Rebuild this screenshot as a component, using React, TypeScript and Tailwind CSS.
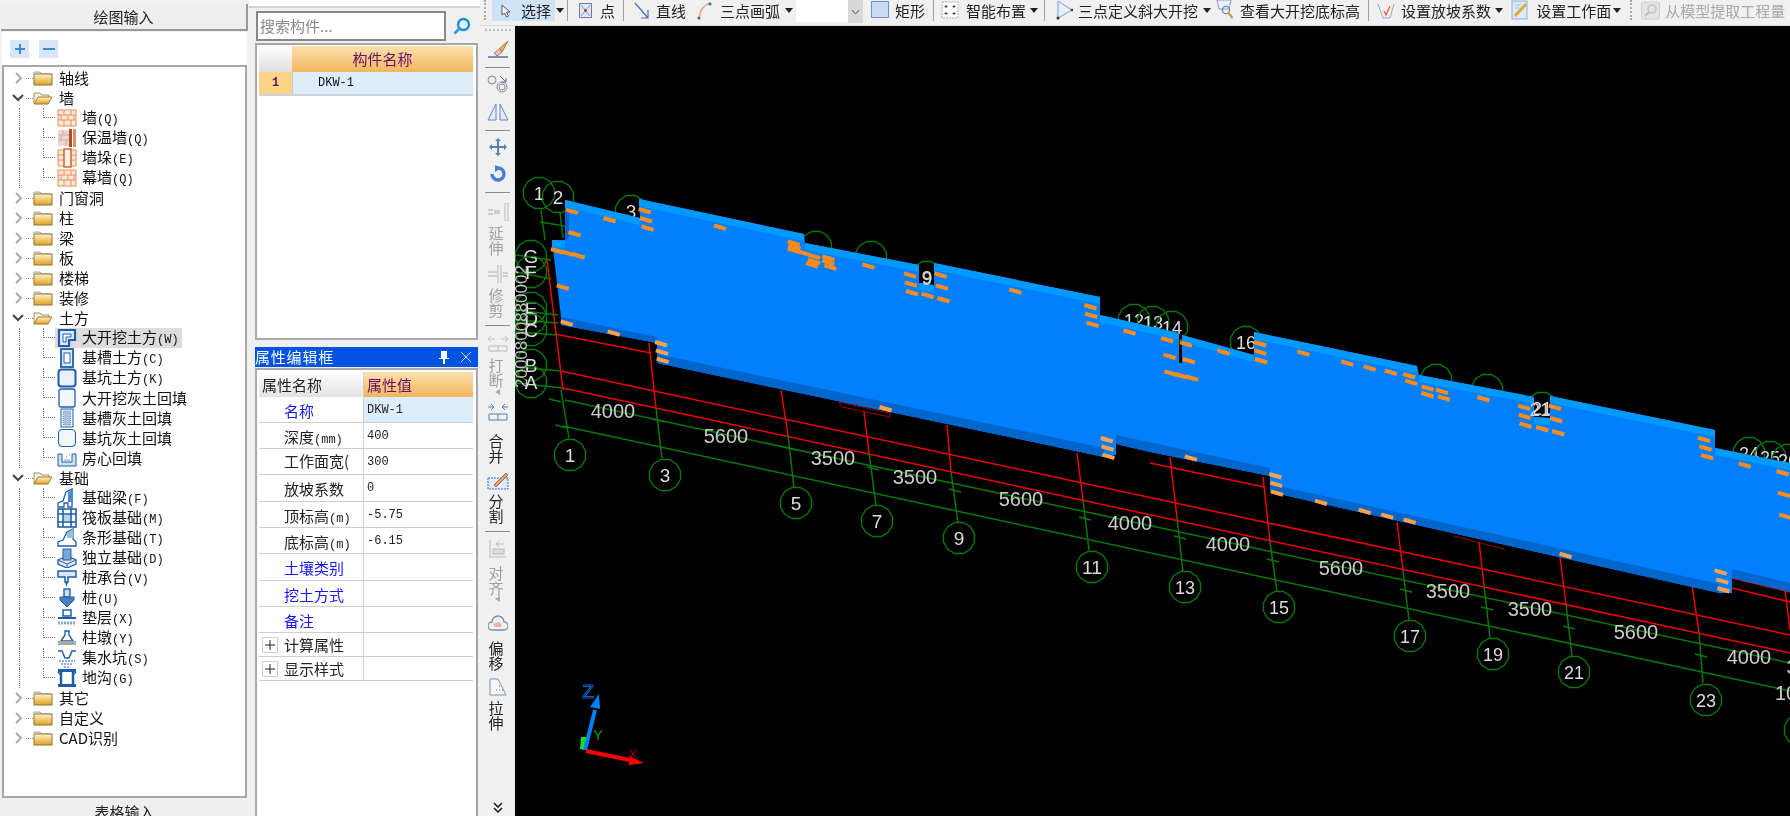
import React from "react";

const CJK = "[font-family:'Noto_Sans_CJK_SC','Liberation_Sans',sans-serif]";
const MONO = "[font-family:'Liberation_Mono','Noto_Sans_CJK_SC',monospace]";

/* ---------- small drawn icons ---------- */
function Folder({ open }: { open?: boolean }) {
  return (
    <svg width="20" height="16" viewBox="0 0 20 16" className="shrink-0">
      <defs>
        <linearGradient id="fo" x1="0" y1="0" x2="0" y2="1">
          <stop offset="0" stopColor="#fff6c8" />
          <stop offset="1" stopColor="#e0a020" />
        </linearGradient>
      </defs>
      {open ? (
        <>
          <path d="M1 14V3h6l2 2h7v3" fill="#f4efe0" stroke="#a89060" />
          <path d="M1 14L5 7h14l-4 7z" fill="url(#fo)" stroke="#a07a30" />
        </>
      ) : (
        <>
          <path d="M1 3V2h6l2 2h9v1" fill="#ddd" stroke="#aaa" />
          <rect x="1" y="4" width="18" height="11" fill="url(#fo)" stroke="#8a7440" />
        </>
      )}
    </svg>
  );
}

function TIcon({ k }: { k: string }) {
  const b = "#1e5ea8";
  const l = "#dfeafa";
  const o = "#e8905c";
  const common = { fill: "none", stroke: b, strokeWidth: 1.5 };
  let c: React.ReactNode = null;
  switch (k) {
    case "brick":
      c = (
        <>
          <rect x="1" y="2" width="18" height="16" fill="#fde8d8" stroke={o} />
          <path d="M1 7h18M1 12h18M7 2v5M14 2v5M4 7v5M11 7v5M17 7v5M7 12v6M14 12v6" stroke={o} fill="none" />
        </>
      );
      break;
    case "insul":
      c = (
        <>
          <rect x="1" y="2" width="12" height="16" fill="#ecd6d2" />
          <path d="M1 7h12M1 12h12M6 2v5M4 7v5M9 12v6" stroke="#d8a8a0" fill="none" />
          <rect x="12" y="1" width="3" height="18" fill="#b84a28" />
          <rect x="16" y="1" width="3" height="18" fill="#d89070" />
        </>
      );
      break;
    case "pier":
      c = (
        <>
          <rect x="1" y="2" width="18" height="16" fill="#fde8d8" stroke={o} />
          <path d="M1 7h18M1 12h18" stroke={o} fill="none" />
          <rect x="7" y="1" width="7" height="18" fill="#fdf0e4" stroke="#c8602c" strokeWidth="1.4" />
        </>
      );
      break;
    case "dkw":
      c = (
        <>
          <path d="M2 2h16v10h-6v6H2z" fill={l} stroke={b} strokeWidth="2.2" />
          <path d="M6 6h8v3h-5v5H6z" fill="#fff" stroke={b} />
        </>
      );
      break;
    case "cao":
      c = (
        <>
          <rect x="4" y="1" width="12" height="18" fill={l} stroke={b} strokeWidth="1.8" />
          <rect x="7" y="5" width="6" height="10" fill="#fff" stroke={b} />
        </>
      );
      break;
    case "keng":
      c = <rect x="1.5" y="1.5" width="17" height="17" rx="3" fill="#e8f0fb" stroke={b} strokeWidth="2" />;
      break;
    case "fill1":
      c = <rect x="2" y="1" width="16" height="18" rx="2" fill="#f2f6fc" stroke={b} strokeWidth="1.3" />;
      break;
    case "fill2":
      c = (
        <>
          <rect x="4" y="1" width="12" height="18" fill="#eef3fb" stroke={b} />
          <rect x="6.5" y="3" width="7" height="14" fill="#a9c0de" stroke="#6e8fb8" strokeDasharray="1 1" />
        </>
      );
      break;
    case "fill3":
      c = <rect x="1.5" y="1.5" width="17" height="17" rx="4" fill="#f4f8fd" stroke={b} strokeWidth="1.1" />;
      break;
    case "room":
      c = (
        <>
          <path d="M1 6v12h18V6h-4v8H5V6z" fill="#cfe0f5" stroke={b} />
          <path d="M7 12h6M9 9h1M12 7h1" stroke="#6f9ed4" />
        </>
      );
      break;
    case "beam":
      c = (
        <>
          <path d="M1 19v-4l5-2 3-9 6-3v18H11v-4H7v4z" fill="#fff" stroke={b} strokeWidth="1.3" />
          <path d="M11 4l5-3v13h-5z" fill="#4a8ad0" />
        </>
      );
      break;
    case "raft":
      c = (
        <>
          <rect x="1" y="1" width="18" height="18" fill="#fff" stroke={b} strokeWidth="1.6" />
          <path d="M1 6h18M1 14h18M6 1v18M14 1v18" stroke={b} strokeWidth="1.6" />
          <rect x="7" y="7" width="6" height="6" fill="#bcd4ef" />
        </>
      );
      break;
    case "strip":
      c = (
        <>
          <path d="M1 18v-4l5-2 4-8 6-3v10l3 3v4z" fill="#fff" stroke={b} strokeWidth="1.3" />
          <path d="M10 5l6-4v9h-6z" fill="#9dbfe6" />
        </>
      );
      break;
    case "iso":
      c = (
        <>
          <path d="M1 12l9-4 9 4v4l-9 4-9-4z" fill="#e4eefb" stroke={b} strokeWidth="1.3" />
          <path d="M1 12l9 4 9-4M10 16v4" stroke={b} fill="none" />
          <rect x="6" y="1" width="8" height="11" fill="#7aa6d8" stroke={b} />
        </>
      );
      break;
    case "cap":
      c = (
        <>
          <path d="M1 3h18v6h-8v5H8V9H1z" fill="#dce8f7" stroke={b} strokeWidth="1.5" />
          <path d="M8 14l1.5 5 1.5-5z" fill={b} />
        </>
      );
      break;
    case "pile":
      c = (
        <>
          <rect x="7" y="1" width="6" height="8" fill="#cfe0f5" stroke={b} strokeWidth="1.4" />
          <path d="M3 9h14v3l-7 7-7-7z" fill="#4a7fc0" stroke={b} />
        </>
      );
      break;
    case "pad":
      c = (
        <>
          <rect x="6" y="2" width="8" height="6" {...common} />
          <path d="M1 10h18" stroke={b} strokeWidth="2" />
          <path d="M1 15h18" stroke="#7fa8d8" strokeWidth="3" strokeDasharray="2 1" />
        </>
      );
      break;
    case "dun":
      c = (
        <>
          <path d="M8 3h4v4l4 6H4l4-6z" fill="#fff" stroke={b} strokeWidth="1.4" />
          <rect x="1" y="13" width="18" height="4" fill="#a8a8a8" />
        </>
      );
      break;
    case "pit":
      c = (
        <>
          <path d="M1 3h4l3 7h4l3-7h4" {...common} />
          <path d="M2 13h16M4 16h12M7 19h6" stroke="#8ab2e0" strokeWidth="2" strokeDasharray="2 1" />
        </>
      );
      break;
    case "ditch":
      c = (
        <>
          <rect x="1" y="1" width="18" height="3" fill={b} />
          <path d="M4 4v13M16 4v13" {...common} strokeWidth="2.5" />
          <rect x="1" y="16" width="18" height="3" fill={b} />
          <path d="M1 4l3 3M19 4l-3 3" {...common} />
        </>
      );
      break;
  }
  return (
    <svg width="20" height="20" viewBox="0 0 20 20" className="shrink-0">
      {c}
    </svg>
  );
}

/* ---------- left tree ---------- */
type Child = { n: string; s?: string; k: string; sel?: boolean };
type Node = { n: string; open?: boolean; kids?: Child[] };
const tree: Node[] = [
  { n: "轴线" },
  {
    n: "墙",
    open: true,
    kids: [
      { n: "墙", s: "(Q)", k: "brick" },
      { n: "保温墙", s: "(Q)", k: "insul" },
      { n: "墙垛", s: "(E)", k: "pier" },
      { n: "幕墙", s: "(Q)", k: "brick" },
    ],
  },
  { n: "门窗洞" },
  { n: "柱" },
  { n: "梁" },
  { n: "板" },
  { n: "楼梯" },
  { n: "装修" },
  {
    n: "土方",
    open: true,
    kids: [
      { n: "大开挖土方", s: "(W)", k: "dkw", sel: true },
      { n: "基槽土方", s: "(C)", k: "cao" },
      { n: "基坑土方", s: "(K)", k: "keng" },
      { n: "大开挖灰土回填", k: "fill1" },
      { n: "基槽灰土回填", k: "fill2" },
      { n: "基坑灰土回填", k: "fill3" },
      { n: "房心回填", k: "room" },
    ],
  },
  {
    n: "基础",
    open: true,
    kids: [
      { n: "基础梁", s: "(F)", k: "beam" },
      { n: "筏板基础", s: "(M)", k: "raft" },
      { n: "条形基础", s: "(T)", k: "strip" },
      { n: "独立基础", s: "(D)", k: "iso" },
      { n: "桩承台", s: "(V)", k: "cap" },
      { n: "桩", s: "(U)", k: "pile" },
      { n: "垫层", s: "(X)", k: "pad" },
      { n: "柱墩", s: "(Y)", k: "dun" },
      { n: "集水坑", s: "(S)", k: "pit" },
      { n: "地沟", s: "(G)", k: "ditch" },
    ],
  },
  { n: "其它" },
  { n: "自定义" },
  { n: "CAD识别" },
];

function TreePanel() {
  return (
    <div className="pt-[1px]">
      {tree.map((f) => (
        <div key={f.n}>
          <div className="flex h-5 items-center">
            <div className="flex w-[22px] shrink-0 justify-end pr-[1px]">
              <svg width="14" height="14" viewBox="0 0 14 14">
                {f.open ? (
                  <path d="M2 4l5 5 5-5" fill="none" stroke="#444" strokeWidth="2" />
                ) : (
                  <path d="M5 2l5 5-5 5" fill="none" stroke="#aaa" strokeWidth="2" />
                )}
              </svg>
            </div>
            <div className="h-px w-[7px] shrink-0 border-b border-dotted border-[#888]" />
            <Folder open={f.open} />
            <span className="ml-[6px] text-[15px] leading-5 text-[#111]">{f.n}</span>
          </div>
          {f.kids?.map((c, i) => (
            <div key={c.n + i} className="flex h-5">
              <div className="w-[15px] shrink-0" />
              <div className="w-[24px] shrink-0 border-l border-dotted border-[#777]" />
              <div className="h-[10px] w-[12px] shrink-0 border-b border-l border-dotted border-[#777]" />
              <div className={`flex h-5 items-center pl-[2px] pr-[3px] ${c.sel ? "bg-[#dcdcdc]" : ""}`}>
                <TIcon k={c.k} />
                <span className="ml-[5px] text-[15px] leading-5 text-[#111]">
                  {c.n}
                  {c.s ? <span className={`${MONO} text-[12px]`}>{c.s}</span> : null}
                </span>
              </div>
            </div>
          ))}
        </div>
      ))}
    </div>
  );
}

function LeftColumn() {
  return (
    <div className="flex w-[249px] shrink-0 flex-col bg-[#f0f0f0]">
      <div className="mx-[1px] mt-[4px] flex h-[27px] shrink-0 items-center justify-center border-b-2 border-r-2 border-[#999] bg-[#eeeeee] pt-[1px] text-[15px] text-[#222]">
        绘图输入
      </div>
      <div className="mx-[2px] mt-[1px] flex h-[33px] shrink-0 items-center gap-[10px] bg-white pl-[8px]">
        <div className="flex h-[18px] w-[19px] items-center justify-center bg-[#d9e6fa]">
          <svg width="12" height="12" viewBox="0 0 12 12">
            <path d="M6 1v10M1 6h10" stroke="#3a8ccc" strokeWidth="2" />
          </svg>
        </div>
        <div className="flex h-[18px] w-[19px] items-center justify-center bg-[#d9e6fa]">
          <svg width="14" height="12" viewBox="0 0 14 12">
            <path d="M1 6h12" stroke="#3a8ccc" strokeWidth="2" />
          </svg>
        </div>
      </div>
      <div className="mx-[2px] h-[733px] shrink-0 overflow-hidden border-2 border-[#a8a8a8] bg-white">
        <TreePanel />
      </div>
      <div className="mx-[1px] mt-[2px] flex h-[20px] shrink-0 items-start justify-center bg-[#eeeeee] pt-[1px] text-[15px] text-[#222]">
        表格输入
      </div>
    </div>
  );
}

/* ---------- middle ---------- */
const orange = "bg-gradient-to-b from-[#fbe0ae] to-[#f2b65a]";
const propRows: { n: string; v?: string; blue?: boolean; sel?: boolean; h: string; up?: boolean }[] = [
  { n: "名称", v: "DKW-1", blue: true, sel: true, h: "h-[26px]" },
  { n: "深度(mm)", v: "400", h: "h-[26px]" },
  { n: "工作面宽(", v: "300", h: "h-[26px]", up: true },
  { n: "放坡系数", v: "0", h: "h-[27px]" },
  { n: "顶标高(m)", v: "-5.75", h: "h-[26px]" },
  { n: "底标高(m)", v: "-6.15", h: "h-[26px]" },
  { n: "土壤类别", blue: true, h: "h-[27px]" },
  { n: "挖土方式", blue: true, h: "h-[26px]" },
  { n: "备注", blue: true, h: "h-[26px]" },
];

function Plus() {
  return (
    <div className="flex h-[16px] w-[16px] shrink-0 items-center justify-center border border-[#cfcfcf] bg-white">
      <svg width="10" height="10" viewBox="0 0 10 10">
        <path d="M5 0v10M0 5h10" stroke="#222" />
      </svg>
    </div>
  );
}

function formatLabel(s: string) {
  const m = s.match(/^([^(]+)(\(.+\))$/);
  if (!m) return s;
  return (
    <>
      {m[1]}
      <span className={`${MONO} text-[12px]`}>{m[2]}</span>
    </>
  );
}

function MiddleColumn() {
  return (
    <div className="flex w-[231px] shrink-0 flex-col bg-[#f0f0f0]">
      <div className="h-[8px] shrink-0 border-b-2 border-[#d4d4d4] bg-white" />
      <div className="ml-[7px] mr-[2px] mt-[3px] flex h-[30px] shrink-0">
        <div className="flex w-[190px] items-center border-2 border-[#888] bg-white pl-[2px] text-[15px] text-[#888]">
          搜索构件...
        </div>
        <div className="flex flex-1 items-center justify-center">
          <svg width="18" height="18" viewBox="0 0 18 18">
            <circle cx="10.5" cy="7.5" r="5.5" fill="#e0f1fb" stroke="#1e90d0" strokeWidth="2.4" />
            <path d="M6.5 11.5L1.5 16.5" stroke="#3c9ce0" strokeWidth="3" />
          </svg>
        </div>
      </div>
      <div className="ml-[6px] mr-[2px] mt-[2px] h-[297px] shrink-0 border-2 border-[#a8a8a8] bg-white pl-[2px] pr-[3px] pt-[1px]">
        <div className="flex h-[26px]">
          <div className="w-[33px] bg-gradient-to-b from-white to-[#dedede]" />
          <div className={`flex flex-1 items-center justify-center text-[15px] text-[#650e66] ${orange}`}>
            构件名称
          </div>
        </div>
        <div className="flex h-[24px] border-b-2 border-[#cfd4da]">
          <div className={`flex w-[33px] items-center justify-center bg-[#fdd385] text-[12px] font-bold text-[#650e66] ${MONO}`}>1</div>
          <div className={`flex flex-1 items-center border-l border-[#c8c8c8] bg-[#deedfc] pl-[25px] text-[12px] text-[#111] ${MONO}`}>
            DKW-1
          </div>
        </div>
      </div>
      <div className="ml-[6px] mr-[2px] mt-[7px] flex h-[20px] shrink-0 items-center bg-[#0052e2] pr-[6px] text-[15px] tracking-[0.8px] text-white">
        <span>属性编辑框</span>
        <svg width="12" height="14" viewBox="0 0 12 14" className="ml-auto">
          <path d="M3 1h6v7h2v1H7v5H5V9H1V8h2z" fill="#fff" />
        </svg>
        <svg width="12" height="12" viewBox="0 0 12 12" className="ml-[10px]">
          <path d="M1 1l10 10M11 1L1 11" stroke="#cfdcf5" />
        </svg>
      </div>
      <div className="ml-[6px] mr-[2px] mt-[1px] flex-1 border-2 border-b-0 border-[#a8a8a8] bg-white pl-[2px] pr-[3px] pt-[2px] text-[15px]">
        <div className="flex h-[25px]">
          <div className="flex w-[105px] items-center border-r border-[#cfcfcf] bg-gradient-to-b from-white to-[#e2e2e2] pl-[3px] pt-[1px] text-[#222]">
            属性名称
          </div>
          <div className={`flex flex-1 items-center pl-[3px] pt-[1px] text-[#650e66] ${orange}`}>属性值</div>
        </div>
        {propRows.map((r) => (
          <div key={r.n} className={`flex ${r.h} border-b border-[#cfcfcf]`}>
            <div className={`flex w-[105px] items-center border-r border-[#cfcfcf] pl-[25px] ${r.up ? "" : "pt-[3px]"} ${r.blue ? "text-[#1616f0]" : "text-[#222]"}`}>
              <span className="whitespace-nowrap">{formatLabel(r.n)}</span>
            </div>
            <div className={`flex flex-1 items-center pl-[3px] text-[12px] text-[#222] ${MONO} ${r.sel ? "bg-[#deedfc]" : ""}`}>{r.v}</div>
          </div>
        ))}
        {["计算属性", "显示样式"].map((n) => (
          <div key={n} className="flex h-[24px] border-b border-[#cfcfcf]">
            <div className="flex w-[105px] items-center border-r border-[#cfcfcf] pl-[3px] text-[#222]">
              <Plus />
              <span className="ml-[6px] pt-[2px]">{n}</span>
            </div>
          </div>
        ))}
      </div>
    </div>
  );
}

/* ---------- top toolbar ---------- */
function Caret({ className = "" }: { className?: string }) {
  return (
    <svg width="8" height="5" viewBox="0 0 8 5" className={`shrink-0 ${className}`}>
      <path d="M0 0h8L4 5z" fill="#222" />
    </svg>
  );
}
function Sep({ className = "" }: { className?: string }) {
  return <div className={`h-[21px] w-px shrink-0 bg-[#a0a0a0] ${className}`} />;
}
function Grip({ className = "" }: { className?: string }) {
  return <div className={`h-[20px] w-[2px] shrink-0 border-l-2 border-dotted border-[#aaa] ${className}`} />;
}
function Lbl({ t, className = "" }: { t: string; className?: string }) {
  return <span className={`shrink-0 whitespace-nowrap text-[15px] leading-[21px] text-[#222] ${className}`}>{t}</span>;
}

function TopBar() {
  return (
    <div className="flex h-[26px] shrink-0 items-start overflow-hidden border-b border-[#dcdcdc] bg-[#f0f0f0]">
      <Grip className="ml-[4px]" />
      <div className="ml-[6px] flex h-[21px] w-[63px] shrink-0 items-center bg-[#cfe3f8] pl-[9px]">
        <svg width="10" height="14" viewBox="0 0 10 14" className="shrink-0">
          <path d="M1 1v10l2.5-2 2 4 2-1-2-4H9z" fill="#fff" stroke="#555" />
        </svg>
        <Lbl t="选择" className="ml-[10px]" />
      </div>
      <Caret className="ml-[1px] mt-[8px]" />
      <Sep className="ml-[3px]" />
      <svg width="13" height="15" viewBox="0 0 13 15" className="ml-[11px] mt-[3px] shrink-0">
        <rect x="0.5" y="0.5" width="12" height="14" fill="#dfe9f8" stroke="#6a7fb0" />
        <path d="M2 2l9 11M11 2L2 13" stroke="#7f94bf" />
        <circle cx="6.5" cy="7.5" r="1.4" fill="#e02020" />
      </svg>
      <Lbl t="点" className="ml-[8px]" />
      <Sep className="ml-[8px]" />
      <svg width="16" height="18" viewBox="0 0 16 18" className="ml-[10px] mt-[2px] shrink-0">
        <path d="M1 1l13 15M14 8v8H7" fill="none" stroke="#3f6fb0" strokeWidth="1.2" />
      </svg>
      <Lbl t="直线" className="ml-[6px]" />
      <svg width="15" height="18" viewBox="0 0 15 18" className="ml-[11px] mt-[2px] shrink-0">
        <path d="M2 16C3 8 7 3 13 1" fill="none" stroke="#e8a080" strokeWidth="1.6" />
        <circle cx="2" cy="16" r="1.6" fill="#3f6fb0" />
        <circle cx="13" cy="2" r="1.6" fill="#3f6fb0" />
      </svg>
      <Lbl t="三点画弧" className="ml-[8px]" />
      <Caret className="ml-[5px] mt-[8px]" />
      <div className="ml-[3px] h-[22px] w-[52px] shrink-0 bg-white" />
      <div className="flex h-[23px] w-[15px] shrink-0 items-center justify-center bg-[#d8d8d8]">
        <svg width="9" height="6" viewBox="0 0 9 6">
          <path d="M1 1l3.5 4L8 1" fill="none" stroke="#555" />
        </svg>
      </div>
      <div className="ml-[8px] mt-[1px] h-[17px] w-[18px] shrink-0 border border-[#6f90c8] bg-[#c9dcf6]" />
      <Lbl t="矩形" className="ml-[6px]" />
      <Sep className="ml-[8px]" />
      <svg width="18" height="18" viewBox="0 0 18 18" className="ml-[7px] mt-[1px] shrink-0">
        <rect x="1" y="1" width="16" height="16" fill="#fff" stroke="#aaa" strokeDasharray="2 1" />
        <path d="M5 4v3M3.500 5.500h3M13 4v3M11.500 5.500h3M5 11v3M3.500 12.500h3M13 11v3M11.500 12.500h3" stroke="#444" />
      </svg>
      <Lbl t="智能布置" className="ml-[7px]" />
      <Caret className="ml-[4px] mt-[8px]" />
      <Sep className="ml-[6px]" />
      <svg width="17" height="20" viewBox="0 0 17 20" className="ml-[11px] shrink-0">
        <path d="M2 1v17l14-8z" fill="#e8f0fb" stroke="#7a9cd4" />
        <circle cx="2" cy="18" r="1.5" fill="#333" />
        <circle cx="16" cy="10" r="1.3" fill="#333" />
      </svg>
      <Lbl t="三点定义斜大开挖" className="ml-[5px]" />
      <Caret className="ml-[5px] mt-[8px]" />
      <svg width="18" height="20" viewBox="0 0 18 20" className="ml-[5px] shrink-0">
        <path d="M1 0h14l-2 9H3z" fill="#eaf0f8" stroke="#8aa0c0" />
        <circle cx="10" cy="10" r="3.600" fill="none" stroke="#7a8ca6" strokeWidth="1.4" />
        <path d="M12.500 13l4 5" stroke="#d89a3c" strokeWidth="2.200" />
      </svg>
      <Lbl t="查看大开挖底标高" className="ml-[6px]" />
      <Sep className="ml-[8px]" />
      <svg width="18" height="18" viewBox="0 0 18 18" className="ml-[8px] mt-[2px] shrink-0">
        <path d="M1 2l5 14h7l4-14" fill="none" stroke="#8aa8cc" />
        <path d="M7 9l2 4 4-9" fill="none" stroke="#e06040" strokeWidth="1.300" />
      </svg>
      <Lbl t="设置放坡系数" className="ml-[6px]" />
      <Caret className="ml-[4px] mt-[8px]" />
      <svg width="19" height="20" viewBox="0 0 19 20" className="ml-[8px] shrink-0">
        <rect x="1" y="1" width="15" height="18" fill="#dbe9f8" stroke="#8fb0d8" />
        <path d="M4 16L15 4" stroke="#e8a93c" strokeWidth="3" />
        <path d="M4 5h6M4 8h4" stroke="#a8c0dc" />
      </svg>
      <Lbl t="设置工作面" className="ml-[6px]" />
      <Caret className="ml-[2px] mt-[8px]" />
      <Grip className="ml-[9px] w-[4px]" />
      <svg width="19" height="19" viewBox="0 0 19 19" className="ml-[7px] mt-[1px] shrink-0">
        <rect x="0.500" y="1" width="18" height="17" rx="2" fill="#e4e4e4" stroke="#cfcfcf" />
        <circle cx="11" cy="8" r="4" fill="none" stroke="#c0c0c0" strokeWidth="1.500" />
        <path d="M8 11l-4 4" stroke="#c0c0c0" strokeWidth="2" />
      </svg>
      <Lbl t="从模型提取工程量" className="ml-[5px] text-[#a8a8a8]" />
    </div>
  );
}

/* ---------- side toolbar ---------- */
function VSep({ className = "" }: { className?: string }) {
  return <div className={`h-px w-[25px] shrink-0 bg-[#8c8c8c] ${className}`} />;
}
function VText({ t, off, className = "" }: { t: string; off?: boolean; className?: string }) {
  return (
    <div className={`mr-[3px] w-[15px] shrink-0 text-[15px] leading-[15px] ${off ? "text-[#a0a0a0]" : "text-[#222]"} ${className}`}>{t}</div>
  );
}
function VCaret({ className = "" }: { className?: string }) {
  return (
    <svg width="5" height="6" viewBox="0 0 5 6" className={`shrink-0 ${className}`}>
      <path d="M5 0v6L0 3z" fill="#aaa" />
    </svg>
  );
}

function SideBar() {
  return (
    <div className="flex w-[35px] shrink-0 flex-col items-center bg-[#f0f0f0] pt-[3px]">
      <div className="h-[3px] w-[26px] shrink-0 border-t-2 border-dotted border-[#bbb]" />
      <svg width="22" height="18" viewBox="0 0 22 18" className="mt-[8px] shrink-0">
        <path d="M21 1l-9 8 3 3z" fill="#e8b860" stroke="#a87c30" />
        <path d="M13 9l-6 4 3 3 5-4z" fill="#f0c8c0" stroke="#c06060" />
        <path d="M1 17h20" stroke="#7a8fb8" strokeWidth="2" />
      </svg>
      <VSep className="mt-[9px]" />
      <svg width="22" height="18" viewBox="0 0 22 18" className="mt-[7px] shrink-0">
        <circle cx="5" cy="5" r="4" fill="#e8eef8" stroke="#8a8a8a" />
        <circle cx="15" cy="12" r="5" fill="none" stroke="#8a8a8a" />
        <circle cx="15" cy="12" r="3" fill="none" stroke="#8a8a8a" />
        <path d="M13 1l6 6M19 3v4h-4" fill="none" stroke="#4a6fb0" />
      </svg>
      <svg width="22" height="18" viewBox="0 0 22 18" className="mt-[10px] shrink-0">
        <path d="M9 1v16H1zM13 1v16h8z" fill="#e4ecf8" stroke="#6a86c0" />
      </svg>
      <VSep className="mt-[9px]" />
      <svg width="20" height="18" viewBox="0 0 20 18" className="mt-[7px] shrink-0">
        <path d="M10 0l3 3h-2v5h5V6l3 3-3 3v-2h-5v5h2l-3 3-3-3h2v-5H4v2L1 9l3-3v2h5V3H7z" fill="#5a7fa8" />
      </svg>
      <svg width="18" height="18" viewBox="0 0 18 18" className="mt-[9px] shrink-0">
        <path d="M9 3a6 6 0 1 1-6 6" fill="none" stroke="#4a7fd0" strokeWidth="3.400" />
        <path d="M6 0l6 3-6 4z" fill="#4a7fd0" />
      </svg>
      <VSep className="mt-[9px]" />
      <svg width="22" height="18" viewBox="0 0 22 18" className="mt-[10px] shrink-0">
        <path d="M18 0h3v18h-3z" fill="none" stroke="#bbb" />
        <path d="M1 7h5M1 11h5M7 8h6M7 10h6" stroke="#aaa" />
      </svg>
      <VText t="延伸" off className="mt-[4px]" />
      <svg width="22" height="18" viewBox="0 0 22 18" className="mt-[10px] shrink-0">
        <path d="M11 0v18M14 0v18" stroke="#bbb" />
        <path d="M1 7h9M1 11h9M16 8h5M16 11h5" stroke="#aaa" />
      </svg>
      <VText t="修剪" off className="mt-[4px]" />
      <VSep className="mt-[8px]" />
      <svg width="22" height="18" viewBox="0 0 22 18" className="mt-[9px] shrink-0">
        <path d="M1 4h7M14 4h7M1 4l3-3M1 4l3 3M21 4l-3-3M21 4l-3 3" fill="none" stroke="#c0c0c0" />
        <path d="M2 11h18v5H2zM11 11v5" fill="none" stroke="#bbb" />
      </svg>
      <VText t="打断" off className="mt-[4px]" />
      <VCaret className="mt-[2px]" />
      <svg width="22" height="18" viewBox="0 0 22 18" className="mt-[9px] shrink-0">
        <path d="M1 3h6M21 3h-6M7 3L4 0M7 3L4 6M15 3l3-3M15 3l3 3" fill="none" stroke="#4a7fd0" />
        <path d="M2 10h18v6H2zM11 10v6" fill="none" stroke="#5a7fb0" />
      </svg>
      <VText t="合并" className="mt-[11px]" />
      <svg width="22" height="18" viewBox="0 0 22 18" className="mt-[9px] shrink-0">
        <rect x="1" y="6" width="20" height="11" fill="#dfe9fa" stroke="#2f6fe0" strokeDasharray="2 1" />
        <path d="M7 13L19 1l2 2-12 12z" fill="#e8a070" stroke="#a06840" />
      </svg>
      <VText t="分割" className="mt-[3px]" />
      <VSep className="mt-[8px]" />
      <svg width="20" height="18" viewBox="0 0 20 18" className="mt-[8px] shrink-0">
        <path d="M2 0v18M2 17h16" stroke="#bbb" />
        <rect x="5" y="9" width="11" height="5" fill="#ddd" stroke="#bbb" />
        <path d="M8 4h8M8 4l3-3M8 4l3 3" fill="none" stroke="#bbb" />
      </svg>
      <VText t="对齐" off className="mt-[7px]" />
      <VCaret className="mt-[1px]" />
      <svg width="20" height="18" viewBox="0 0 20 18" className="mt-[13px] shrink-0">
        <path d="M4 15a4 4 0 0 1 0-8 6 6 0 0 1 12 0 4 4 0 0 1 0 8z" fill="#eef3fa" stroke="#7a90b0" strokeWidth="1.400" />
        <path d="M7 12a2 2 0 0 1 1-4 3 3 0 0 1 5 1 2 2 0 0 1 0 3z" fill="#f4b0a8" />
      </svg>
      <VText t="偏移" className="mt-[7px]" />
      <svg width="20" height="18" viewBox="0 0 20 18" className="mt-[8px] shrink-0">
        <path d="M2 1h8l8 16H2z" fill="#f4f7fc" stroke="#7a90b0" />
        <path d="M11 8h1M14 12h1M11 12h1M8 12h1" stroke="#555" />
      </svg>
      <VText t="拉伸" className="mt-[4px]" />
      <svg width="10" height="11" viewBox="0 0 10 11" className="mb-[3px] mt-auto shrink-0">
        <path d="M1 1l4 4 4-4M1 6l4 4 4-4" fill="none" stroke="#222" strokeWidth="1.600" />
      </svg>
    </div>
  );
}

/* ---------- CAD canvas ---------- */
const pts = (a: number[][]) => a.map((p) => p.join(",")).join(" ");
const z7 = (x: number, y: number) => [510 + x / 2.45, 160 + y / 3];
const z8 = (x: number, y: number) => [1150 + x / 2.45, 300 + y / 3];

const outline = [
  [565, 200], [640, 218], [639, 199], [804, 234], [805, 243], [919, 265], [919, 283], [934, 285], [934, 263],
  [1100, 297], [1100, 315], [1179, 333], [1179, 363], [1182, 363], [1182, 335], [1254, 355], [1254, 332],
  [1417, 366], [1419, 375], [1534, 397], [1534, 417], [1550, 418], [1550, 396], [1715, 430], [1715, 448], [1790, 463],
  [1790, 592], [1732, 578], [1732, 593], [1719, 593], [1270, 492], [1270, 476], [1150, 452], [1116, 444], [1116, 455],
  [1104, 457], [657, 363], [657, 343], [561, 325], [561, 317], [552, 240], [565, 240],
];
const topBands: number[][][] = [
  [[565, 200], [640, 218]], [[639, 199], [804, 234]], [[805, 243], [919, 265]], [[934, 263], [1100, 297]],
  [[1100, 315], [1179, 333]], [[1182, 335], [1254, 355]], [[1254, 332], [1417, 366]], [[1419, 375], [1534, 397]],
  [[1550, 396], [1715, 430]], [[1715, 448], [1790, 463]], [[552, 240], [565, 241]], [[919, 283], [934, 285]], [[1534, 417], [1550, 418]],
];
const darkBands = [
  [[561, 317], [657, 337], [657, 343], [561, 325]],
  [[657, 354], [1104, 448], [1104, 457], [657, 363]],
  [[1116, 435], [1270, 468], [1270, 476], [1150, 452], [1116, 444]],
  [[1270, 484], [1719, 584], [1719, 593], [1270, 492]],
  [[1732, 569], [1790, 583], [1790, 592], [1732, 578]],
  [[565, 208], [569, 209], [569, 238], [565, 240]],
];
const dashes7 = [
  [152,155],[244,180],[330,153],[333,180],[337,205],[514,202],[158,222],[115,273],[140,280],[168,288],[129,382],
  [878,319],[980,346],[982,373],[985,399],[1023,407],[1062,420],[1055,346],[1058,382],[1238,394],[1422,441],[1424,467],[1427,494],[1518,517],
  [695,250],[697,262],[695,272],[720,280],[745,290],[780,295],[745,305],[780,308],[785,322],[740,315],
];
const dashes7L = [[139,490],[254,520],[370,552],[372,577],[374,602],[920,747],[1462,840],[1464,865],[1466,890]];
const dashes8 = [
  [42,120],[48,170],[50,220],[76,228],[103,235],[88,133],[95,183],[180,157],[270,132],[270,157],[272,183],[376,160],[483,190],[538,205],
  [590,218],[635,228],[640,248],[680,265],[715,275],[680,285],[720,295],[817,297],[917,323],[918,350],[920,376],[961,387],[1000,399],[992,323],[995,360],
  [1357,419],[1361,445],[1365,471],[1457,496],[1550,519],[1553,584],[1557,650],
];
const dashes8L = [[100,475],[307,528],[309,554],[311,580],[419,608],[526,635],[581,649],[636,664],[1018,767],[1398,817],[1402,844],[1405,870]];

const reds: number[][] = [
  [561,371,1790,635],[563,388,1790,653],[555,334,651,353],[1150,463,1264,487],[1732,578,1790,592],[1732,588,1790,602],
  [547,260,563,390],[649,343,656,408],[781,390,788,435],[864,412,869,453],[947,425,951,472],[1077,453,1083,500],
  [1170,457,1177,518],[1263,477,1270,542],[1397,522,1403,570],[1479,542,1484,585],[1560,557,1566,605],[1692,585,1699,633],[1785,590,1790,630],
];
const ticks: number[][] = [
  [555,400],[561,426],[659,420],[790,448],[873,468],[955,490],[1085,518],[1180,537],[1273,560],[1406,590],[1487,608],[1569,627],[1701,655],
];
const greens: number[][] = [
  [565,400,1790,663],[563,426,1790,691],
  [561,390,569,438],[656,408,662,458],[788,435,794,488],[869,453,876,505],[951,472,958,523],[1083,500,1089,550],
  [1177,518,1183,572],[1270,542,1277,592],[1403,570,1409,620],[1484,585,1490,638],[1566,605,1572,656],[1699,633,1703,683],
  [516,255,551,260],[516,272,551,279],[516,310,558,315],[516,320,558,323],[516,332,557,335],[516,367,561,371],[516,383,563,388],
  [540,222,565,226],[541,210,545,240],[560,213,563,238],
];
const bubbles: [number, number, string][] = [
  [570,455,"1"],[665,475,"3"],[796,503,"5"],[877,521,"7"],[959,538,"9"],[1092,567,"11"],[1185,587,"13"],[1279,607,"15"],
  [1410,636,"17"],[1493,654,"19"],[1574,672,"21"],[1706,700,"23"],[1800,730,""],
  [539,193,"1"],[558,197,"2"],[631,211,"3"],[816,247,""],[871,257,""],[927,277,"9"],
  [1134,320,"12"],[1153,322,"13"],[1172,327,"14"],[1246,342,"16"],[1436,380,""],[1487,390,""],[1542,408,"21"],
  [1749,453,"24"],[1770,457,"25"],[1788,460,"26"],
  [531,256,"G"],[531,272,"F"],[531,308,"E"],[531,318,"D"],[531,330,"C"],[531,365,"B"],[531,382,"A"],
];
const dims: [number, number, string][] = [
  [613,411,"4000"],[726,436,"5600"],[833,458,"3500"],[915,477,"3500"],[1021,499,"5600"],[1130,523,"4000"],
  [1228,544,"4000"],[1341,568,"5600"],[1448,591,"3500"],[1530,609,"3500"],[1636,632,"5600"],[1749,657,"4000"],[1792,667,"3"],[1786,693,"10"],
];

function poly12(cx: number, cy: number, r: number) {
  const out: number[][] = [];
  for (let i = 0; i < 12; i++) {
    const a = (Math.PI * 2 * (i + 0.5)) / 12;
    out.push([+(cx + r * Math.cos(a)).toFixed(1), +(cy + r * Math.sin(a)).toFixed(1)]);
  }
  return pts(out);
}

function Canvas() {
  const dash = (p: number[], key: string, c: string) => (
    <line key={key} x1={p[0] - 6} y1={p[1] - 2} x2={p[0] + 6} y2={p[1] + 1.5} stroke={c} strokeWidth="4" />
  );
  return (
    <svg
      viewBox="515 26 1275 790"
      width="1275"
      height="790"
      className="block h-[790px] w-[1275px] shrink-0 bg-black [font-family:'Liberation_Sans',sans-serif]"
    >
      {reds.map((l, i) => (
        <line key={i} x1={l[0]} y1={l[1]} x2={l[2]} y2={l[3]} stroke="#f00000" strokeWidth="1.500" />
      ))}
      {greens.map((l, i) => (
        <line key={i} x1={l[0]} y1={l[1]} x2={l[2]} y2={l[3]} stroke="#087808" strokeWidth="1.500" />
      ))}
      {ticks.map(([x, y], i) => (
        <line key={i} x1={x - 6} y1={y - 1} x2={x + 6} y2={y + 2} stroke="#087808" strokeWidth="1.500" />
      ))}
      {bubbles.map(([x, y, t], i) => (
        <g key={i}>
          <polygon points={poly12(x, y, 16)} fill="none" stroke="#087808" strokeWidth="1.400" />
          <text x={x} y={y + 7} textAnchor="middle" fontSize="19" fill="#dedede" textLength={t.length > 1 ? 20 : undefined} lengthAdjust="spacingAndGlyphs">
            {t}
          </text>
        </g>
      ))}
      <text x="0" y="0" fontSize="17" fill="#c4c4c4" transform="translate(527 388) rotate(-90)">
        2000800880002
      </text>
      {dims.map(([x, y, t], i) => (
        <text key={i} x={x} y={y + 7} textAnchor="middle" fontSize="20" fill="#cccccc">
          {t}
        </text>
      ))}
      <polyline points="839,402 890,413 890,417 842,407 839,402" fill="none" stroke="#a00000" />
      <polyline points="1454,536 1504,549" fill="none" stroke="#a00000" />

      <polygon points={pts(outline)} fill="#0080ff" />
      {topBands.map((b, i) => (
        <polygon key={i} points={pts([b[0], b[1], [b[1][0], b[1][1] + 7], [b[0][0], b[0][1] + 7]])} fill="#0099ff" />
      ))}
      {darkBands.map((b, i) => (
        <polygon key={i} points={pts(b)} fill="#0066cc" />
      ))}
      {dashes7.map((p, i) => dash(z7(p[0], p[1]), `a${i}`, "#ff8c1a"))}
      {dashes8.map((p, i) => dash(z8(p[0], p[1]), `b${i}`, "#ff8c1a"))}
      {dashes7L.map((p, i) => dash(z7(p[0], p[1]), `c${i}`, "#ffa04a"))}
      {dashes8L.map((p, i) => dash(z8(p[0], p[1]), `d${i}`, "#ffa04a"))}
      <text x="927" y="285" textAnchor="middle" fontSize="19" fill="#d4d4d4">9</text>
      <text x="1540" y="416" textAnchor="middle" fontSize="19" fill="#d4d4d4">21</text>

      {/* axis triad */}
      <path d="M581 737l-1 12 4 1 3-13z" fill="#16e016" />
      <line x1="585" y1="750" x2="595" y2="710" stroke="#0080ff" strokeWidth="4" />
      <polygon points="599,694 600,709 590,707" fill="#0080ff" />
      <line x1="586" y1="751" x2="630" y2="760" stroke="#ff0000" strokeWidth="4" />
      <polygon points="644,763 629,765 629,756" fill="#ff0000" />
      <text x="588" y="698" textAnchor="middle" fontSize="19" fill="none" stroke="#0a5fc8" strokeWidth="1">Z</text>
      <text x="598" y="740" textAnchor="middle" fontSize="15" fill="#0a9a0a">Y</text>
      <text x="633" y="759" textAnchor="middle" fontSize="15" fill="#8a0000">X</text>
    </svg>
  );
}

export default function App() {
  return (
    <div className={`flex h-[816px] w-[1790px] overflow-hidden bg-[#f0f0f0] blur-[0.35px] ${CJK}`}>
      <LeftColumn />
      <MiddleColumn />
      <div className="flex min-w-0 flex-1 flex-col">
        <TopBar />
        <div className="flex min-h-0 flex-1">
          <SideBar />
          <Canvas />
        </div>
      </div>
    </div>
  );
}
